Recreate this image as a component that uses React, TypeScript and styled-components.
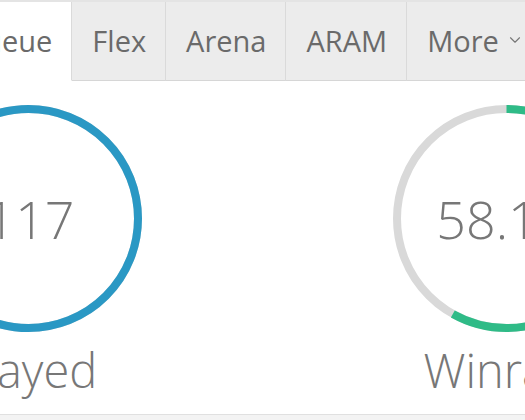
import styled, { createGlobalStyle } from "styled-components";
import { ChevronDown } from "lucide-react";

const GlobalStyle = createGlobalStyle`
  html, body {
    margin: 0;
    padding: 0;
    background: #ffffff;
  }
  body {
    font-family: "Open Sans", "Liberation Sans", sans-serif;
  }
`;

const queues = ["Solo Queue", "Flex", "Arena", "ARAM"];

type Stat = {
  value: string;
  label: string;
  fill: number;
  color: string;
};

const stats: Stat[] = [
  { value: "117", label: "Played", fill: 1, color: "#2a98c4" },
  { value: "58.1%", label: "Winrate", fill: 0.581, color: "#2fbb87" },
];

const RING_SIZE = 227;
const RING_STROKE = 8;

const Ring: React.FC<{ fill: number; color: string }> = ({ fill, color }) => {
  const r = (RING_SIZE - RING_STROKE) / 2;
  const c = 2 * Math.PI * r;
  return (
    <svg width={RING_SIZE} height={RING_SIZE} viewBox={`0 0 ${RING_SIZE} ${RING_SIZE}`}>
      <circle
        cx={RING_SIZE / 2}
        cy={RING_SIZE / 2}
        r={r}
        fill="none"
        stroke="#d9d9d9"
        strokeWidth={RING_STROKE}
      />
      <circle
        cx={RING_SIZE / 2}
        cy={RING_SIZE / 2}
        r={r}
        fill="none"
        stroke={color}
        strokeWidth={RING_STROKE}
        strokeDasharray={`${c * fill} ${c}`}
        transform={`rotate(-90 ${RING_SIZE / 2} ${RING_SIZE / 2})`}
      />
    </svg>
  );
};

const App: React.FC = () => {
  return (
    <>
      <GlobalStyle />
      <Page>
        <TabBar>
          {queues.map((q, i) => (
            <Tab key={q} $active={i === 0}>
              {q}
            </Tab>
          ))}
          <Tab $active={false}>
            More
            <ChevronDown size={18} strokeWidth={1.5} />
          </Tab>
        </TabBar>
        <StatsRow>
          {stats.map((s) => (
            <StatItem key={s.label}>
              <RingBox>
                <Ring fill={s.fill} color={s.color} />
                <Value>{s.value}</Value>
              </RingBox>
              <Label>{s.label}</Label>
            </StatItem>
          ))}
        </StatsRow>
        <Footer />
      </Page>
    </>
  );
};

const Page = styled.div`
  width: 525px;
  height: 420px;
  overflow: hidden;
  display: flex;
  flex-direction: column;
  border-top: 2px solid #e4e4e4;
  box-sizing: border-box;
`;

const TabBar = styled.nav`
  display: flex;
  flex-shrink: 0;
  margin-left: -124px;
  height: 79px;
  box-sizing: border-box;
`;

const Tab = styled.div<{ $active: boolean }>`
  display: flex;
  align-items: center;
  gap: 7px;
  flex-shrink: 0;
  padding: 0 19px 2px 20px;
  font-size: 29px;
  color: #6a6a6a;
  white-space: nowrap;
  background: ${(p) => (p.$active ? "#ffffff" : "#ececec")};
  border-right: 1px solid #dadada;
  border-bottom: 1px solid ${(p) => (p.$active ? "transparent" : "#d6d6d6")};

  svg {
    color: #777;
  }
`;

const StatsRow = styled.section`
  display: grid;
  grid-template-columns: repeat(2, 478px);
  margin-left: -211px;
  padding: 24px 0 12px;
`;

const StatItem = styled.div`
  display: flex;
  flex-direction: column;
  align-items: center;
`;

const RingBox = styled.div`
  display: grid;
  place-items: center;
  width: ${RING_SIZE}px;
  height: ${RING_SIZE}px;

  & > * {
    grid-area: 1 / 1;
  }
`;

const Value = styled.span`
  padding-left: 4px;
  font-size: 52px;
  font-weight: 300;
  color: #777;
`;

const Label = styled.span`
  margin-top: 6px;
  font-size: 47px;
  font-weight: 300;
  color: #777;
`;

const Footer = styled.div`
  flex: 1;
  background: #f3f3f3;
  border-top: 1px solid #e0e0e0;
`;

export default App;
